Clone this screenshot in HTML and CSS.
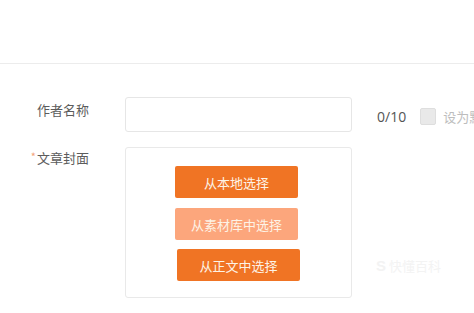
FILE: index.html
```html
<!DOCTYPE html>
<html lang="zh-CN">
<head>
<meta charset="utf-8">
<title>文章设置</title>
<link rel="stylesheet" href="styles.css">
</head>
<body>
<div class="page">
  <header class="topbar"></header>
  <form class="form">
    <div class="row row-author">
      <label class="label">作者名称</label>
      <div class="input"></div>
      <div class="extra">
        <span class="count">0/10</span>
        <span class="checkbox"></span>
        <span class="check-text">设为默认作者</span>
      </div>
    </div>
    <div class="row row-cover">
      <label class="label"><span class="star">*</span>文章封面</label>
      <div class="cover">
        <button type="button" class="btn btn-primary">从本地选择</button>
        <button type="button" class="btn btn-light">从素材库中选择</button>
        <button type="button" class="btn btn-primary btn-shift">从正文中选择</button>
      </div>
      <div class="watermark">
        <span class="wm-logo">S</span><span class="wm-text">快懂百科</span>
      </div>
    </div>
  </form>
</div>
</body>
</html>
```
FILE: styles.css
```css
html, body {
  margin: 0;
  padding: 0;
  background: #ffffff;
  overflow: hidden;
}
body {
  font-family: "Noto Sans CJK SC", "Noto Sans", sans-serif;
  color: #555555;
  width: 474px;
  height: 313px;
}
.page {
  width: 474px;
  white-space: nowrap;
}
.topbar {
  height: 63px;
  border-bottom: 1px solid #ececec;
}
.form {
  padding-top: 33px;
}
.row {
  display: grid;
  grid-template-columns: 89px 227px auto;
  column-gap: 36px;
  align-items: start;
}
.row-author {
  margin-bottom: 15px;
}
.label {
  font-size: 13px;
  line-height: 17px;
  color: #5c5c5c;
  text-align: right;
  padding-top: 4px;
}
.row-cover .label {
  padding-top: 1px;
}
.star {
  color: #f3a27a;
  font-size: 11px;
  margin-right: 1px;
  vertical-align: 2px;
}
.input {
  box-sizing: border-box;
  height: 35px;
  border: 1px solid #e6e6e6;
  border-radius: 3px;
  background: #fff;
}
.extra {
  display: flex;
  align-items: center;
  height: 35px;
  margin-left: -11px;
  padding-top: 4px;
  box-sizing: border-box;
}
.count {
  font-family: "Open Sans", "Noto Sans", sans-serif;
  font-size: 14px;
  color: #555;
  margin-right: 14px;
}
.checkbox {
  box-sizing: border-box;
  width: 16px;
  height: 17px;
  background: #e9e9e9;
  border: 1px solid #dedede;
  border-radius: 2px;
  margin-right: 7px;
}
.check-text {
  font-size: 13px;
  color: #bdbdbd;
}
.cover {
  box-sizing: border-box;
  height: 151px;
  border: 1px solid #e9e9e9;
  border-radius: 3px;
  padding: 18px 0 0 49px;
  display: flex;
  flex-direction: column;
  align-items: flex-start;
}
.btn {
  box-sizing: border-box;
  width: 123px;
  height: 32px;
  border: none;
  border-radius: 2px;
  font-family: "Noto Sans CJK SC", "Noto Sans", sans-serif;
  font-size: 13px;
  color: #fdf3e6;
  padding: 0;
  margin-bottom: 10px;
  cursor: pointer;
}
.btn-primary {
  background: #f07424;
}
.btn-light {
  background: #fca67c;
  margin-bottom: 9px;
}
.btn-shift {
  margin-left: 2px;
}
.watermark {
  align-self: start;
  margin-top: 109px;
  margin-left: -12px;
  display: flex;
  align-items: center;
  color: #f3f3f3;
  font-size: 13px;
}
.wm-logo {
  font-weight: bold;
  font-family: "Liberation Sans", sans-serif;
  font-size: 15px;
  margin-right: 3px;
}
```
